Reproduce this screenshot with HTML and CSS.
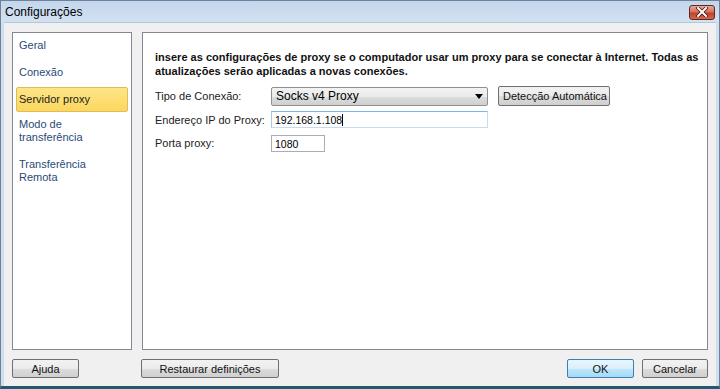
FILE: index.html
```html
<!DOCTYPE html>
<html lang="pt">
<head>
    <meta charset="UTF-8">
    <title>Configurações</title>
    <link rel="stylesheet" href="styles.css">
</head>
<body>

<div class="window">
    <div class="title-bar">
        <span class="title">Configurações</span>
        <div class="close-btn">
            <svg width="14" height="10" viewBox="0 0 14 10">
                <path d="M3 1 L11 9 M11 1 L3 9" stroke="#3a0c08" stroke-width="3.4" stroke-linecap="square"/>
                <path d="M3 1 L11 9 M11 1 L3 9" stroke="#ffffff" stroke-width="2" stroke-linecap="square"/>
            </svg>
        </div>
    </div>
    <div class="frame">
        <div class="panels">
            <ul class="nav">
                <li>Geral</li>
                <li>Conexão</li>
                <li class="active">Servidor proxy</li>
                <li>Modo de<br>transferência</li>
                <li>Transferência<br>Remota</li>
            </ul>
            <div class="content">
                <p class="intro">insere as configurações de proxy se o computador usar um proxy para se conectar à Internet. Todas as atualizações serão aplicadas a novas conexões.</p>
                <div class="form-row">
                    <label>Tipo de Conexão:</label>
                    <div class="select">
                        <span>Socks v4 Proxy</span>
                        <svg width="8" height="5" viewBox="0 0 8 5"><path d="M0 0 H8 L4 5 Z" fill="#000"/></svg>
                    </div>
                    <button class="btn auto-btn">Detecção Automática</button>
                </div>
                <div class="form-row">
                    <label>Endereço IP do Proxy:</label>
                    <div class="input ip-input">192.168.1.108<span class="caret"></span></div>
                </div>
                <div class="form-row">
                    <label>Porta proxy:</label>
                    <div class="input port-input">1080</div>
                </div>
            </div>
        </div>
        <div class="footer">
            <button class="btn help-btn">Ajuda</button>
            <button class="btn reset-btn">Restaurar definições</button>
            <div class="spacer"></div>
            <button class="btn ok-btn">OK</button>
            <button class="btn cancel-btn">Cancelar</button>
        </div>
    </div>
</div>

</body>
</html>
```

FILE: styles.css
```css
body {
    margin: 0;
    font-family: "Liberation Sans", Arial, sans-serif;
    font-size: 11px;
    background: #dfe9f5;
}
.window {
    width: 720px;
    height: 389px;
    box-sizing: border-box;
    border: 1px solid #6f8296;
    border-bottom: 3px solid #1f5a6e;
    background: #cfdef0;
    display: flex;
    flex-direction: column;
}
.title-bar {
    height: 21px;
    display: flex;
    align-items: center;
    justify-content: space-between;
    padding: 0 4px 0 4px;
    background: linear-gradient(#c3d6ec, #d3e2f2);
}
.title {
    font-size: 12px;
    color: #000;
    padding-top: 1px;
}
.close-btn {
    width: 26px;
    height: 15px;
    margin-top: 1px;
    border: 1px solid #5e2a22;
    border-radius: 3px;
    box-sizing: border-box;
    background: linear-gradient(#e9a898 0%, #d5705c 45%, #c0422a 55%, #d2674c 100%);
    display: flex;
    align-items: center;
    justify-content: center;
}
.frame {
    flex: 1;
    margin: 0 3px;
    background: #f0f0f0;
    border-top: 1px solid #b4c6d9;
    display: flex;
    flex-direction: column;
    padding: 9px 8px 0 8px;
}
.panels {
    display: flex;
    gap: 10px;
    height: 318px;
}
.nav {
    list-style: none;
    margin: 0;
    padding: 0 3px;
    width: 120px;
    box-sizing: border-box;
    background: #fff;
    border: 1px solid #828790;
    color: #2a4a78;
}
.nav li {
    padding: 5px 2px 7px 2px;
    line-height: 13px;
    border: 1px solid transparent;
}
.nav li.active {
    background: linear-gradient(#fde586, #fcd75f);
    border-color: #e1bb57;
    border-radius: 2px;
    color: #1b1b1b;
    padding-bottom: 5px;
}
.content {
    flex: 1;
    background: #fff;
    border: 1px solid #828790;
    padding: 17px 4px 15px 12px;
}
.intro {
    margin: 0 0 8px 0;
    font-weight: bold;
    font-size: 11px;
    line-height: 14px;
    letter-spacing: 0.02px;
    color: #111;
}
.form-row {
    display: flex;
    align-items: center;
    margin-bottom: 5px;
}
.form-row label {
    width: 116px;
    color: #222;
}
.select {
    width: 217px;
    height: 19px;
    box-sizing: border-box;
    border: 1px solid #8e8f8f;
    border-radius: 2px;
    background: linear-gradient(#f2f2f2 0%, #ebebeb 50%, #dddddd 51%, #cfcfcf 100%);
    display: flex;
    align-items: center;
    justify-content: space-between;
    padding: 0 4px 0 4px;
    font-size: 12px;
}
.btn {
    font-family: "Liberation Sans", Arial, sans-serif;
    font-size: 11px;
    height: 19px;
    padding: 0 4px;
    border: 1px solid #707070;
    border-radius: 2px;
    background: linear-gradient(#f2f2f2 0%, #ebebeb 50%, #dddddd 51%, #cfcfcf 100%);
    color: #111;
    white-space: nowrap;
}
.auto-btn {
    margin-left: 10px;
    width: 112px;
    height: 20px;
}
.input {
    height: 17px;
    box-sizing: border-box;
    border: 1px solid #abadb3;
    padding: 0 3px;
    display: flex;
    align-items: center;
    font-size: 10.5px;
}
.ip-input {
    width: 217px;
    border-color: #7eb4ea #c5dbf0 #c5dbf0 #a9c8e8;
}
.caret {
    width: 1px;
    height: 12px;
    background: #000;
}
.port-input {
    width: 54px;
    margin-top: 2px;
}
.footer {
    display: flex;
    align-items: center;
    padding-top: 9px;
}
.help-btn {
    width: 67px;
}
.reset-btn {
    width: 138px;
    margin-left: 62px;
}
.spacer {
    flex: 1;
}
.ok-btn {
    width: 67px;
    border-color: #3c7fb1;
    background: linear-gradient(#eaf6fd 0%, #d9f0fc 50%, #bee6fd 51%, #a7d9f5 100%);
}
.cancel-btn {
    width: 66px;
    margin-left: 8px;
}
```
